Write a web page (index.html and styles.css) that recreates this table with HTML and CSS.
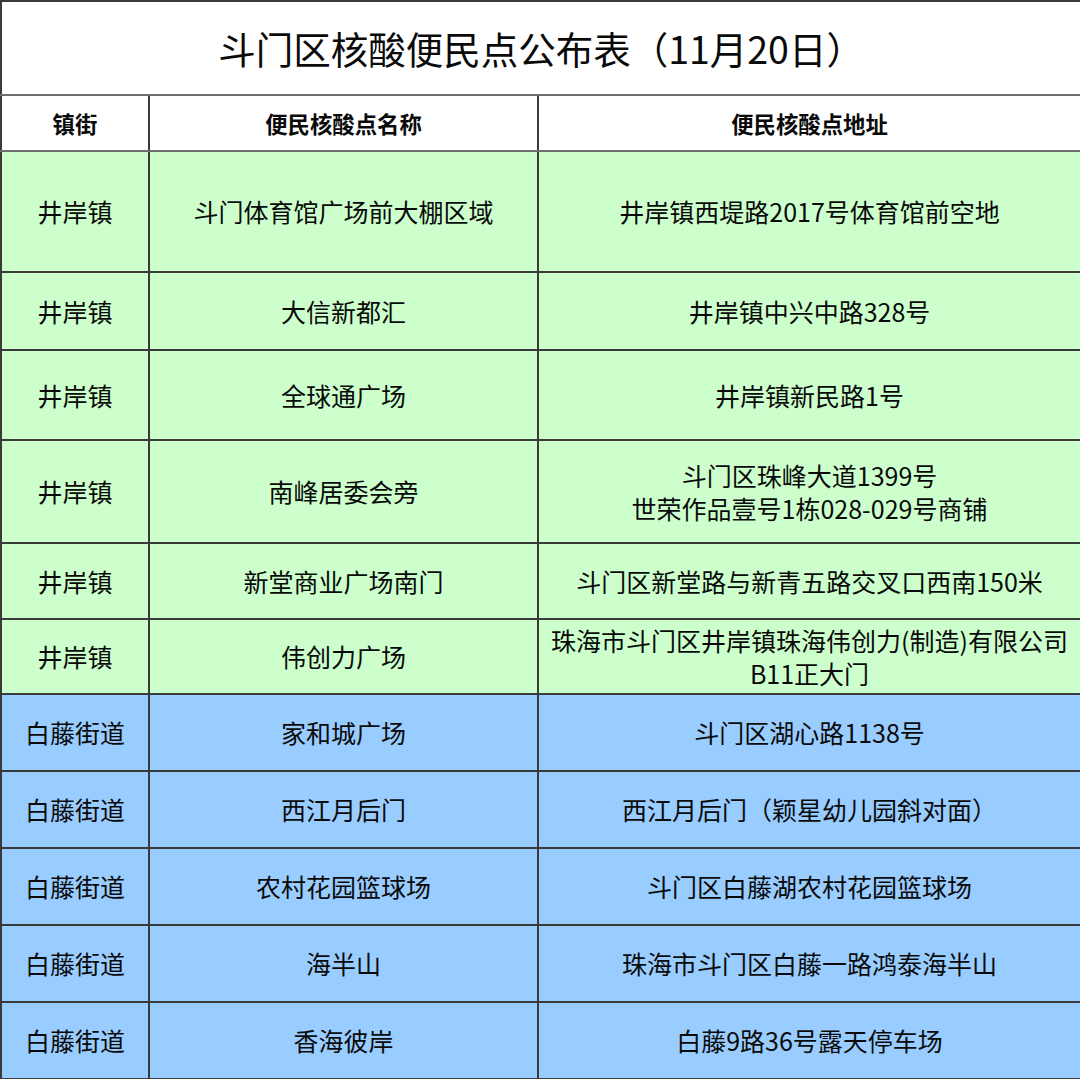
FILE: index.html
```html
<!DOCTYPE html>
<html lang="zh-CN">
<head>
<meta charset="utf-8">
<link rel="stylesheet" href="styles.css">
</head>
<body>
<table class="sheet">
  <colgroup>
    <col class="c1"><col class="c2"><col class="c3">
  </colgroup>
  <tr class="title-row"><td colspan="3" class="title">斗门区核酸便民点公布表（11月20日）</td></tr>
  <tr class="head-row"><th>镇街</th><th>便民核酸点名称</th><th>便民核酸点地址</th></tr>
  <tr class="g r1"><td>井岸镇</td><td>斗门体育馆广场前大棚区域</td><td>井岸镇西堤路2017号体育馆前空地</td></tr>
  <tr class="g r2"><td>井岸镇</td><td>大信新都汇</td><td>井岸镇中兴中路328号</td></tr>
  <tr class="g r3"><td>井岸镇</td><td>全球通广场</td><td>井岸镇新民路1号</td></tr>
  <tr class="g r4"><td>井岸镇</td><td>南峰居委会旁</td><td>斗门区珠峰大道1399号<br>世荣作品壹号1栋028-029号商铺</td></tr>
  <tr class="g r5"><td>井岸镇</td><td>新堂商业广场南门</td><td>斗门区新堂路与新青五路交叉口西南150米</td></tr>
  <tr class="g r6"><td>井岸镇</td><td>伟创力广场</td><td>珠海市斗门区井岸镇珠海伟创力(制造)有限公司<br>B11正大门</td></tr>
  <tr class="b"><td>白藤街道</td><td>家和城广场</td><td>斗门区湖心路1138号</td></tr>
  <tr class="b"><td>白藤街道</td><td>西江月后门</td><td>西江月后门（颖星幼儿园斜对面）</td></tr>
  <tr class="b"><td>白藤街道</td><td>农村花园篮球场</td><td>斗门区白藤湖农村花园篮球场</td></tr>
  <tr class="b"><td>白藤街道</td><td>海半山</td><td>珠海市斗门区白藤一路鸿泰海半山</td></tr>
  <tr class="b"><td>白藤街道</td><td>香海彼岸</td><td>白藤9路36号露天停车场</td></tr>
</table>
</body>
</html>
```
FILE: styles.css
```css
html, body {
  margin: 0;
  padding: 0;
  background: #ffffff;
}
body {
  width: 1080px;
  height: 1079px;
  overflow: hidden;
  font-family: "Noto Sans CJK SC", "Noto Sans", sans-serif;
  color: #0a0a0a;
}
.sheet {
  width: 1080px;
  border-collapse: collapse;
  table-layout: fixed;
}
.c1 { width: 148px; }
.c2 { width: 389px; }
.c3 { width: 543px; }
.sheet td, .sheet th {
  border: 2px solid #3a3a3a;
  text-align: center;
  vertical-align: middle;
  padding: 0;
  font-size: 25px;
  line-height: 33px;
  font-weight: 400;
}
.title-row td {
  height: 92px;
  font-size: 37.5px;
  line-height: 44px;
  background: #ffffff;
  border-bottom-color: #6e6e6e;
}
.head-row th {
  height: 54px;
  font-size: 22.4px;
  font-weight: 700;
  background: #ffffff;
  border-color: #6e6e6e;
  border-left-color: #3a3a3a;
  border-right-color: #3a3a3a;
}
.head-row th + th { border-left-color: #555555; }
.g td { background: #ccffcc; }
.b td { background: #99ccff; height: 75px; }
.r1 td { height: 119px; }
.r2 td { height: 76px; }
.r3 td { height: 88px; }
.r4 td { height: 101px; }
.r5 td { height: 74px; }
.r6 td { height: 73px; }
```
